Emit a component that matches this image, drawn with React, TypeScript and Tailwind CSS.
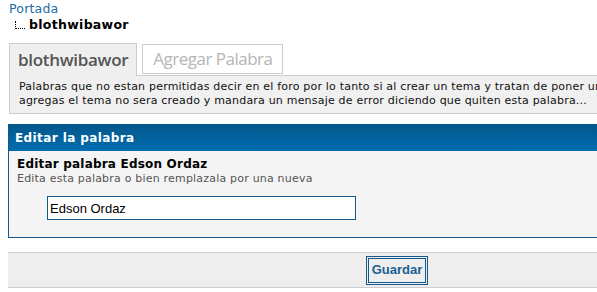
export default function App() {
  return (
    <div className="w-full overflow-hidden bg-white" style={{ height: 292 }}>
      <div className="w-[786px] pl-2 font-['DejaVu_Sans',Verdana,sans-serif] text-[12px] tracking-[0.2px] text-black">
        <div className="pl-px pt-[1px] text-[12.5px] leading-[16px] text-[#1a6aa8]">Portada</div>
        <div className="flex items-end pl-[7px] leading-[16px]">
          <span className="mb-[4px] mr-[4px] h-[8px] w-[10px] border-b border-l border-dotted border-black" />
          <span className="text-[12.5px] font-bold tracking-[0.3px]">blothwibawor</span>
        </div>

        <div className="mt-[10px] flex items-end pl-px">
          <div className="relative z-10 -mb-px flex h-[33px] items-center border border-b-0 border-[#cccccc] bg-[#efefef] px-[8px] font-['Open_Sans',sans-serif] text-[17px] font-semibold tracking-[-0.3px] text-[#555555]">
            blothwibawor
          </div>
          <div className="ml-[5px] mb-px flex h-[30px] items-center border border-[#cccccc] bg-white px-[10px] font-['Open_Sans',sans-serif] text-[17px] tracking-[-0.5px] text-[#b5b5b5]">
            Agregar Palabra
          </div>
        </div>
        <div className="ml-px h-[39px] overflow-hidden border border-[#cccccc] bg-[#f0f0f0] pl-[9px] pt-[4px] text-[11px] leading-[14px] text-[#111111]">
          <div className="whitespace-nowrap">
            Palabras que no estan permitidas decir en el foro por lo tanto si al crear un tema y tratan de poner una de estas palabras y la
          </div>
          <div className="whitespace-nowrap">
            agregas el tema no sera creado y mandara un mensaje de error diciendo que quiten esta palabra...
          </div>
        </div>

        <div className="mt-[10px] border-b border-l border-[#14598a] bg-[#f4f4f4]">
          <div className="flex h-[27px] items-center bg-gradient-to-b from-[#045789] to-[#006db2] pl-[6px] font-bold tracking-[0.4px] text-white">
            Editar la palabra
          </div>
          <div className="pb-[17px] pl-[8px] pt-[5px]">
            <div className="font-bold leading-[16px]">Editar palabra Edson Ordaz</div>
            <div className="text-[11px] leading-[14px] text-[#555555]">
              Edita esta palabra o bien remplazala por una nueva
            </div>
            <input
              defaultValue="Edson Ordaz"
              className="ml-[30px] mt-[10px] h-[24px] w-[309px] border border-[#14598a] bg-white px-[2px] font-['Liberation_Sans',Arial,sans-serif] text-[13px] tracking-normal text-black outline-none"
            />
          </div>
        </div>

        <div className="mt-[14px] flex h-[36px] items-center justify-center border-y border-[#cccccc] bg-[#eeeeee]">
          <button className="h-[29px] border-[3px] border-double border-[#14598a] bg-[#eeeeee] px-[3px] font-['Liberation_Sans',Arial,sans-serif] text-[13px] font-bold tracking-normal text-[#1c5f94]">
            Guardar
          </button>
        </div>
      </div>
    </div>
  );
}
